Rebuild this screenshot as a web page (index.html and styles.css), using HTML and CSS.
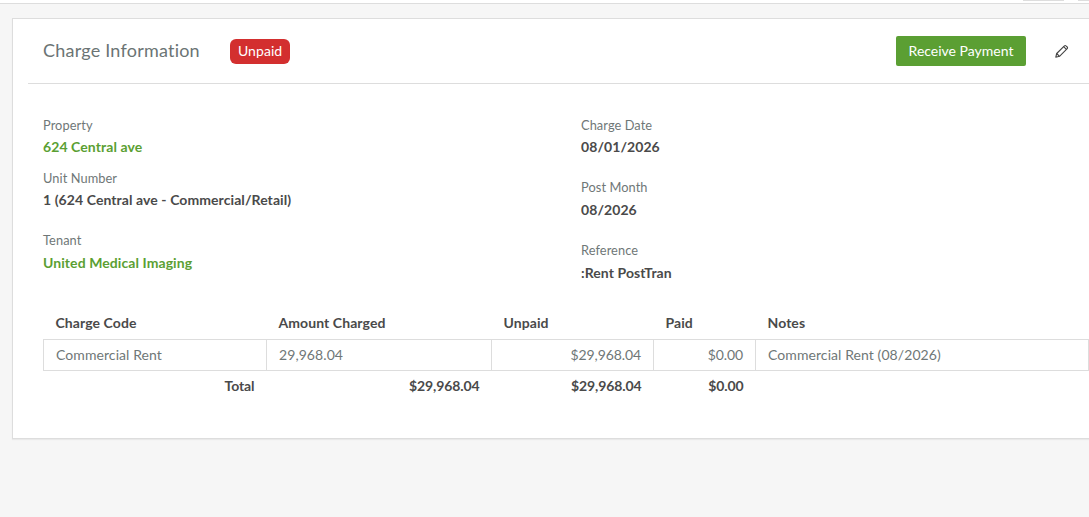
FILE: index.html
```html
<!DOCTYPE html>
<html lang="en">
  <head>
    <meta charset="UTF-8" />
    <meta name="viewport" content="width=device-width, initial-scale=1.0" />
    <title>Charge Information</title>
    <link rel="stylesheet" href="styles.css">
  </head>
  <body>
    <div class="topbar">
      <span class="topbar-tab"></span>
      <span class="topbar-tab topbar-tab-last"></span>
    </div>

    <div class="page">
      <div class="card">
        <div class="card-header">
          <div class="card-title">
            <h1>Charge Information</h1>
            <span class="badge">Unpaid</span>
          </div>
          <div class="card-actions">
            <button class="btn-receive">Receive Payment</button>
            <svg class="edit-icon" width="14" height="14" viewBox="0 0 14 14" fill="none" stroke="#444" stroke-width="1.1" stroke-linejoin="round">
              <path d="M.8 13.2l.9-3.7 7.7-7.7a1.1 1.1 0 0 1 1.6 0l1.2 1.2a1.1 1.1 0 0 1 0 1.6l-7.7 7.7z" />
              <path d="M8.6 2.6l2.8 2.8M1.7 9.5l2.8 2.8" />
            </svg>
          </div>
        </div>

        <div class="details">
          <div class="details-col">
            <div class="field field-first">
              <div class="field-label">Property</div>
              <a class="field-value link" href="#">624 Central ave</a>
            </div>
            <div class="field">
              <div class="field-label">Unit Number</div>
              <div class="field-value">1 (624 Central ave - Commercial/Retail)</div>
            </div>
            <div class="field">
              <div class="field-label">Tenant</div>
              <a class="field-value link" href="#">United Medical Imaging</a>
            </div>
          </div>
          <div class="details-col">
            <div class="field">
              <div class="field-label">Charge Date</div>
              <div class="field-value">08/01/2026</div>
            </div>
            <div class="field">
              <div class="field-label">Post Month</div>
              <div class="field-value">08/2026</div>
            </div>
            <div class="field field-reference">
              <div class="field-label">Reference</div>
              <div class="field-value">:Rent PostTran</div>
            </div>
          </div>
        </div>

        <table class="charges">
          <thead>
            <tr>
              <th class="col-code">Charge Code</th>
              <th class="col-amount">Amount Charged</th>
              <th class="col-unpaid">Unpaid</th>
              <th class="col-paid">Paid</th>
              <th class="col-notes">Notes</th>
            </tr>
          </thead>
          <tbody>
            <tr>
              <td>Commercial Rent</td>
              <td>29,968.04</td>
              <td class="num">$29,968.04</td>
              <td class="num">$0.00</td>
              <td>Commercial Rent (08/2026)</td>
            </tr>
          </tbody>
          <tfoot>
            <tr>
              <td class="num">Total</td>
              <td class="num">$29,968.04</td>
              <td class="num">$29,968.04</td>
              <td class="num">$0.00</td>
              <td></td>
            </tr>
          </tfoot>
        </table>
      </div>
    </div>
  </body>
</html>
```

FILE: styles.css
```css
* {
  box-sizing: border-box;
}

html,
body {
  height: 100%;
}

body {
  margin: 0;
  overflow: hidden;
  background-color: #f6f6f6;
  font-family: Lato, "Open Sans", sans-serif;
  font-size: 14px;
  letter-spacing: 0.08px;
  color: #4a4a4a;
}

.topbar {
  display: flex;
  justify-content: flex-end;
  height: 4px;
  background: white;
  border-bottom: 1px solid #ddd;
}

.topbar-tab {
  width: 41px;
  height: 1px;
  margin-right: 14px;
  background: #ddd;
}

.topbar-tab-last {
  width: 11px;
  margin-right: 0;
}

.page {
  padding: 14px 0 0 12px;
  width: 1100px;
}

.card {
  height: 421px;
  background: white;
  border: 1px solid #ddd;
  box-shadow: 0 1px 1px rgba(0, 0, 0, 0.05);
}

.card-header {
  display: flex;
  justify-content: space-between;
  align-items: center;
  height: 65px;
  margin-left: 15px;
  padding: 0 30px 0 15px;
  border-bottom: 1px solid #ddd;
}

.card-title {
  display: flex;
  align-items: center;
  gap: 30px;
}

.card-title h1 {
  margin: 0 0 2px;
  font-size: 18px;
  font-weight: 400;
  color: #6b7474;
  letter-spacing: 0.22px;
}

.badge {
  height: 25px;
  padding: 0 8px;
  line-height: 24px;
  border-radius: 6px;
  background: #d32f2f;
  color: white;
}

.card-actions {
  display: flex;
  align-items: center;
  gap: 29px;
}

.btn-receive {
  width: 130px;
  height: 30px;
  padding: 0 0 2px;
  border: none;
  border-radius: 2px;
  background: #5b9f33;
  color: white;
  font-family: inherit;
  font-size: 14px;
}

.edit-icon {
  display: block;
}

.details {
  display: flex;
  padding: 32px 0 0 30px;
}

.details-col:first-child {
  width: 538px;
}

.field {
  height: 62.4px;
}

.field-first {
  height: 53px;
}

.field-label {
  line-height: 18px;
  margin-bottom: 4.2px;
  color: #6f7777;
  font-size: 12.8px;
}

.field-reference .field-label {
  margin-bottom: 5px;
}

.field-value {
  display: block;
  line-height: 18px;
  font-weight: 700;
  color: #4a4a4a;
}

.link {
  color: #5b9f33;
  text-decoration: none;
}

.charges {
  table-layout: fixed;
  width: 1046px;
  margin: 3.8px 0 0 30px;
  border-collapse: collapse;
}

.charges th {
  height: 33px;
  padding: 0 12px 2px;
  text-align: left;
  font-weight: 700;
}

.col-code {
  width: 223px;
}

.col-amount {
  width: 225px;
}

.col-unpaid {
  width: 162px;
}

.col-paid {
  width: 102px;
}

.charges tbody td {
  height: 31px;
  padding: 0 12px 1px;
  border: 1px solid #ddd;
  color: #6f7777;
}

.charges tfoot td {
  height: 31px;
  padding: 0 12px 2px;
  font-weight: 700;
}

.charges td.num {
  text-align: right;
  letter-spacing: -0.1px;
}
```
